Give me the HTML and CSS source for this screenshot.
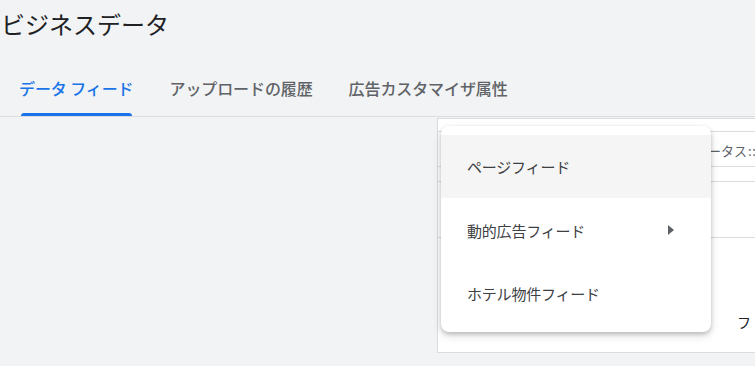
FILE: index.html
```html
<!DOCTYPE html>
<html lang="ja">
<head>
<meta charset="utf-8">
<title>ビジネスデータ</title>
<link rel="stylesheet" href="styles.css">
</head>
<body>
<div class="page">
  <h1 class="title">ビジネスデータ</h1>
  <nav class="tabs">
    <div class="tab active"><span class="tab-label">データ フィード</span><span class="tab-ink"></span></div>
    <div class="tab"><span class="tab-label">アップロードの履歴</span></div>
    <div class="tab"><span class="tab-label">広告カスタマイザ属性</span></div>
  </nav>
  <div class="content">
    <section class="panel">
      <div class="toolbar"><span class="filter">ステータス<span class="colons">::</span></span></div>
      <div class="table-head"></div>
      <div class="table-body"><span class="cell">フ</span></div>
    </section>
  </div>
  <div class="menu">
    <div class="menu-item hover">ページフィード</div>
    <div class="menu-item sub">動的広告フィード<span class="caret"></span></div>
    <div class="menu-item">ホテル物件フィード</div>
  </div>
</div>
</body>
</html>
```

FILE: styles.css
```css
* { box-sizing: border-box; }
html, body {
  margin: 0;
  padding: 0;
  width: 755px;
  height: 366px;
  overflow: hidden;
  background: #f1f3f4;
  font-family: Roboto, "Noto Sans CJK JP", sans-serif;
}
.page {
  position: relative;
  width: 755px;
  height: 366px;
  overflow: hidden;
}
.title {
  margin: 0;
  padding-left: 1px;
  height: 48px;
  line-height: 48px;
  font-size: 24px;
  font-weight: 400;
  color: #202124;
  font-family: "Noto Sans CJK JP", sans-serif;
}
.tabs {
  display: flex;
  height: 69px;
  padding-left: 19px;
  border-bottom: 1px solid #dadce0;
  gap: 36px;
}
.tab {
  display: flex;
  flex-direction: column;
  padding-top: 28px;
}
.tab-label {
  font-family: "Noto Sans CJK JP", sans-serif;
  font-size: 16px;
  line-height: 24px;
  font-weight: 500;
  color: #5f6368;
  white-space: nowrap;
  letter-spacing: -0.1px;
}
.tab.active .tab-label { color: #1a73e8; }
.tab-ink {
  margin-top: auto;
  margin-left: 2px;
  margin-right: 1px;
  height: 3px;
  background: #1a73e8;
  border-radius: 3px 3px 0 0;
}
.content {
  display: flex;
  padding-left: 437px;
  padding-top: 1px;
}
.panel {
  flex: 1 1 auto;
  min-width: 0;
  height: 235px;
  background: #fff;
  border: 1px solid #dadce0;
  border-right: none;
  display: flex;
  flex-direction: column;
  padding-top: 12px;
}
.toolbar {
  height: 36px;
  border-top: 1px solid #dadce0;
  border-bottom: 1px solid #dadce0;
  display: flex;
  align-items: center;
  padding-left: 244px;
  padding-top: 3px;
}
.filter {
  font-family: "Noto Sans CJK JP", sans-serif;
  font-size: 13px;
  color: #5f6368;
  white-space: nowrap;
}
.colons {
  margin-left: 1px;
  letter-spacing: 0.5px;
}
.table-head {
  margin-top: 14px;
  height: 57px;
  border-top: 1px solid #dadce0;
  border-bottom: 1px solid #dadce0;
}
.table-body {
  padding-top: 74px;
  padding-left: 299px;
  white-space: nowrap;
}
.cell {
  font-family: "Noto Sans CJK JP", sans-serif;
  font-size: 14px;
  line-height: 20px;
  color: #202124;
}
.menu {
  position: absolute;
  left: 441px;
  top: 126px;
  width: 270px;
  padding: 9px 0 7px;
  background: #fff;
  border-radius: 8px;
  box-shadow: 0 2px 4px rgba(0,0,0,0.2), 0 4px 10px rgba(0,0,0,0.12);
}
.menu-item {
  position: relative;
  height: 63px;
  display: flex;
  align-items: center;
  padding-left: 26px;
  font-family: "Noto Sans CJK JP", sans-serif;
  font-size: 15px;
  letter-spacing: -0.2px;
  color: #3c4043;
}
.menu-item.sub { height: 64px; }
.menu-item.hover { background: #f5f5f5; }
.caret {
  margin-left: auto;
  margin-right: 37px;
  width: 0;
  height: 0;
  border-top: 5.5px solid transparent;
  border-bottom: 5.5px solid transparent;
  border-left: 6px solid #5f6368;
}
```
